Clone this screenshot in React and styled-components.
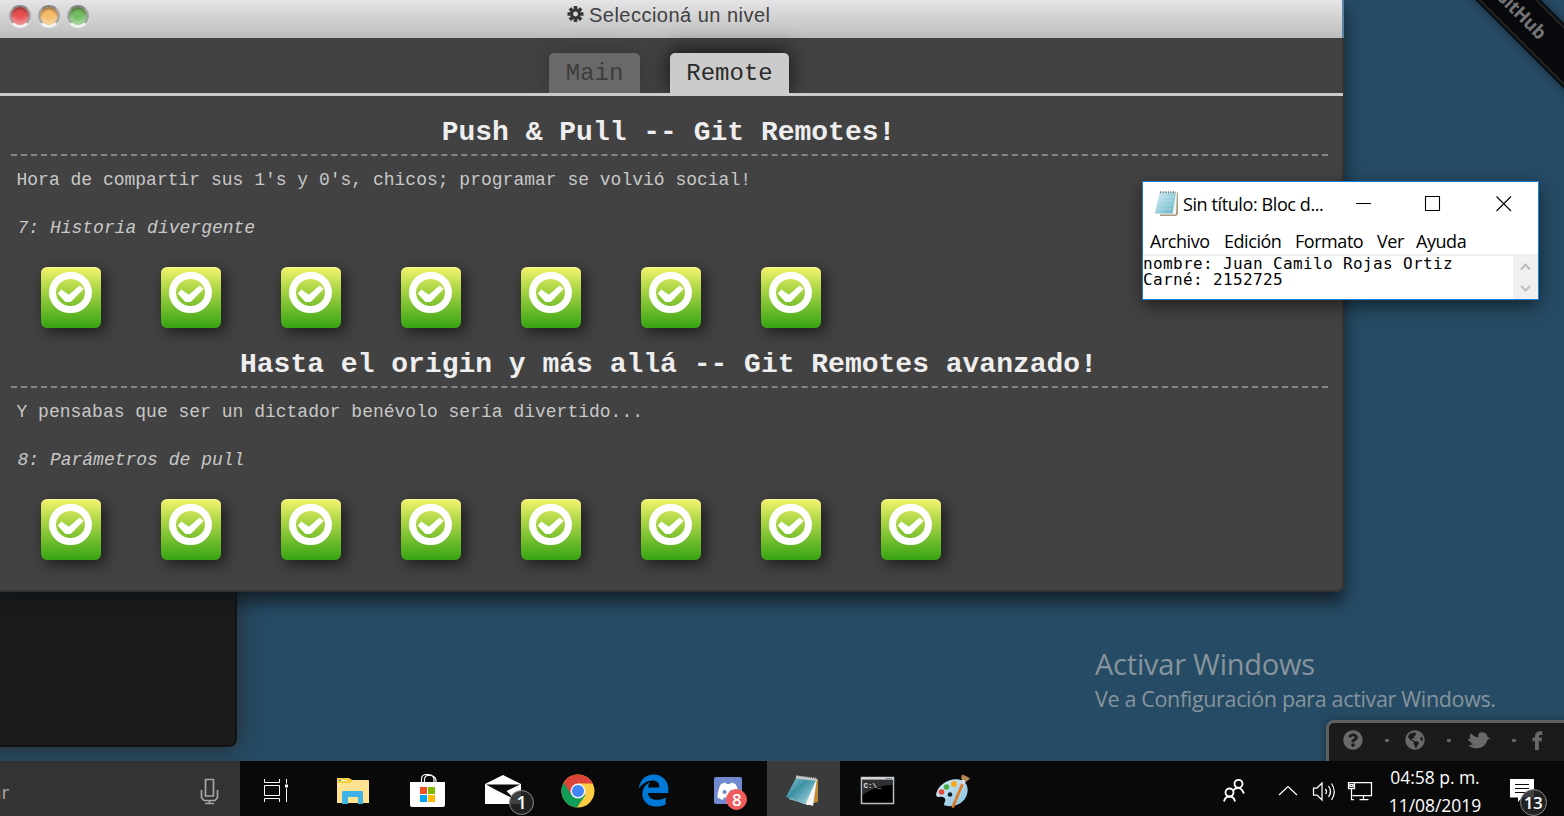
import React from 'react';
import styled, { createGlobalStyle, css } from 'styled-components';
import { FaQuestionCircle, FaGlobeAmericas, FaEdgeLegacy } from 'react-icons/fa';

const ui = '"Open Sans", "Noto Sans", sans-serif';
const mono = '"Liberation Mono", monospace';

const GlobalStyle = createGlobalStyle`
  * { box-sizing: border-box; }
  body { margin: 0; overflow: hidden; background: #264b64; }
  svg { display: block; }
`;

const Desktop = styled.div`
  position: relative;
  display: flex;
  flex-direction: column;
  width: 1564px;
  height: 816px;
  overflow: hidden;
  background: #264b64;
`;

const Workspace = styled.div`
  position: relative;
  flex: 1;
  overflow: hidden;
`;

const TerminalWindow = styled.div`
  position: absolute;
  left: -20px;
  top: 300px;
  width: 257px;
  height: 447px;
  background: #1b1b1b;
  border: 2px solid #131313;
  border-radius: 8px;
  box-shadow: 0 0 24px rgba(40, 40, 40, 0.9);
`;

/* Level selection window */
const LevelWindow = styled.section`
  position: absolute;
  left: 0;
  top: 0;
  width: 1344px;
  height: 592px;
  display: flex;
  flex-direction: column;
  border-bottom-right-radius: 6px;
  box-shadow: 0 10px 16px rgba(15, 20, 25, 0.75);
`;

const TitleBar = styled.header`
  display: flex;
  align-items: flex-start;
  height: 38px;
  padding: 3px 0 0 9px;
  background: linear-gradient(#e6e4e6, #bdbdbd);
  border-right: 2px solid #5c82a3;
`;

const Lights = styled.div`
  display: flex;
  gap: 7px;
  width: 84px;
  padding-top: 2px;
`;

const Light = styled.span`
  width: 22px;
  height: 22px;
  border-radius: 50%;
  border: 2px solid #858585;
  border-bottom-color: #f4f4f4;
  border-left-color: #a5a5a5;
  border-right-color: #a5a5a5;
  background: ${(p) => p.$fill};
  box-shadow: 0 1px 0 #eee, inset 0 2px 3px rgba(60, 30, 20, 0.5), inset 0 -4px 4px rgba(255, 255, 255, 0.4);
`;

const WindowTitle = styled.h1`
  display: flex;
  align-items: center;
  gap: 5px;
  margin: 0 0 0 474px;
  font: 400 20px/24px "Liberation Sans", sans-serif;
  letter-spacing: 0.48px;
  color: #404040;
`;

const WindowBody = styled.div`
  flex: 1;
  background: #424242;
  border-right: 2px solid #343434;
  border-bottom: 2px solid #343434;
  border-bottom-right-radius: 6px;
`;

const Tabs = styled.nav`
  display: flex;
  align-items: flex-end;
  gap: 30px;
  height: 58px;
  margin-right: -1px;
  padding-left: 549px;
  border-bottom: 3px solid #cbcbcb;
`;

const Tab = styled.div`
  width: ${(p) => p.$width}px;
  height: 40px;
  border-radius: 5px 5px 0 0;
  font: 400 24px/42px ${mono};
  text-align: center;
  background: #696969;
  color: #3d3d3d;
  box-shadow: 0 0 20px rgba(30, 30, 30, 0.35);
  clip-path: inset(-30px -30px 0 -30px);
  ${(p) => p.$active && css`
    background: #cbcbcb;
    color: #2a2a2a;
    box-shadow: 0 -2px 20px #111;
  `}
`;

const Sequence = styled.section`
  height: 232px;
  padding: 19px 14px 0 11px;
`;

const SequenceTitle = styled.h2`
  margin: 0;
  height: 41px;
  padding-right: 2px;
  border-bottom: 2px dashed #858585;
  font: 700 28px/36px ${mono};
  text-align: center;
  color: #eee;
`;

const About = styled.p`
  margin: 0;
  padding: 12px 0 0 5.5px;
  font: 400 18px/25px ${mono};
  color: #c8c8c8;
`;

const LevelGroup = styled.p`
  margin: 0;
  padding: 23px 0 0 6.5px;
  font: italic 400 18px/25px ${mono};
  color: #c8c8c8;
`;

const Levels = styled.div`
  display: flex;
  gap: 60px;
  padding: 26px 0 0 30px;
`;

const LevelButton = styled.div`
  width: 60px;
  height: 61px;
  border-radius: 6px;
  border-top: 1px solid #f6f79a;
  background: linear-gradient(#f1f36c, #a6d343 38%, #37a413);
  box-shadow: 4px 4px 14px rgba(15, 15, 15, 0.75);
`;

/* Notepad */
const Notepad = styled.section`
  position: absolute;
  left: 1142px;
  top: 181px;
  width: 397px;
  height: 119px;
  display: flex;
  flex-direction: column;
  background: #fff;
  border: 1px solid #1681d8;
  box-shadow: 0 6px 16px rgba(0, 0, 0, 0.5);
  color: #000;
`;

const NoteTitleBar = styled.div`
  display: flex;
  height: 46px;
  padding-left: 10px;
`;

const NoteTitle = styled.div`
  width: 164px;
  padding: 10px 0 0 3px;
  font: 400 18px/24px ${ui};
  letter-spacing: -0.4px;
  white-space: nowrap;
`;

const NoteMenu = styled.div`
  display: flex;
  gap: 14px;
  height: 28px;
  padding: 1px 0 0 7px;
  border-bottom: 2px solid #f0f0f0;
  font: 400 18px/25px ${ui};
`;

const MenuItem = styled.span`
  width: ${(p) => p.$width}px;
  letter-spacing: -0.45px;
  white-space: nowrap;
`;

const NoteBody = styled.div`
  flex: 1;
  display: flex;
  justify-content: space-between;
`;

const NoteText = styled.pre`
  margin: 0;
  font: 400 16px/16px "DejaVu Sans Mono", monospace;
  letter-spacing: 0.37px;
`;

const ScrollBar = styled.div`
  width: 25px;
  background: #f0f0f0;
`;

const Ribbon = styled.div`
  position: absolute;
  left: 1422px;
  top: -9px;
  width: 200px;
  height: 46px;
  transform: rotate(45deg);
  background: #08090d;
  box-shadow: 0 0 8px rgba(0, 0, 0, 0.5);
  padding: 2px 0;
`;

const RibbonStitch = styled.div`
  height: 42px;
  padding-right: 2px;
  border-top: 2px solid #242424;
  border-bottom: 2px solid #242424;
  font: 700 18.5px/38px ${ui};
  letter-spacing: -0.4px;
  text-align: center;
  color: #747474;
`;

const Watermark = styled.div`
  position: absolute;
  left: 1095px;
  top: 644px;
  color: #87949d;
  font-family: ${ui};
  white-space: nowrap;
`;

const WatermarkTitle = styled.div`
  font-size: 29px;
  line-height: 40px;
  letter-spacing: -0.22px;
`;

const WatermarkText = styled.div`
  font-size: 21.5px;
  line-height: 30px;
  letter-spacing: -0.34px;
`;

const SocialBar = styled.div`
  position: absolute;
  left: 1326px;
  top: 720px;
  width: 250px;
  height: 60px;
  display: flex;
  align-items: flex-start;
  padding: 7px 0 0 14px;
  background: #1b1b1b;
  border: 3px solid #5f5f5f;
  border-top-left-radius: 8px;
  box-shadow: 0 0 10px rgba(0, 0, 0, 0.3);
  color: #696969;
`;

const SocialItem = styled.span`
  display: flex;
  align-items: center;
  height: 20px;
  width: ${(p) => p.$width}px;
`;

const Dot = styled.span`
  width: 4px;
  height: 3px;
  margin: 9px ${(p) => p.$after}px 0 0;
  border-radius: 1px;
  background: #666;
`;

/* Taskbar */
const Taskbar = styled.footer`
  display: flex;
  height: 55px;
  background: #090909;
  color: #fff;
  font-family: ${ui};
`;

const SearchBox = styled.div`
  display: flex;
  justify-content: space-between;
  width: 240px;
  background: #333;
  color: #a8a8a8;
  font-size: 19px;
  line-height: 63px;
  overflow: hidden;
`;

const SearchText = styled.span`
  margin-left: -9px;
`;

const Tasks = styled.div`
  display: flex;
  gap: 2px;
  padding-left: 2px;
`;

const Task = styled.div`
  position: relative;
  width: 73px;
  height: 55px;
  background: ${(p) => (p.$active ? '#3b3b3b' : 'transparent')};
`;

const CountBadge = styled.span`
  position: absolute;
  left: ${(p) => p.$x}px;
  top: ${(p) => p.$y}px;
  width: ${(p) => p.$size}px;
  height: ${(p) => p.$size}px;
  border-radius: 50%;
  border: 1px solid ${(p) => (p.$red ? '#f15b5b' : '#8c8c8c')};
  background: ${(p) => (p.$red ? '#f15b5b' : 'rgba(38, 38, 38, 0.88)')};
  font: 600 ${(p) => p.$font}px/${(p) => p.$size - 2}px ${ui};
  text-align: center;
  letter-spacing: -0.5px;
`;

const EdgeMark = styled(FaEdgeLegacy)`
  width: 33px;
  height: 33px;
  margin: 13px 0 0 20px;
  color: #0078d7;
`;

const Tray = styled.div`
  display: flex;
  margin-left: auto;
  width: 350px;
`;

const Clock = styled.div`
  width: 110px;
  padding-top: 2px;
  font-size: 17.5px;
  line-height: 28px;
  letter-spacing: -0.05px;
  text-align: center;
  white-space: nowrap;
`;

const Notifications = styled.div`
  position: relative;
  width: 74px;
`;

const Icon = ({ w = 73, h = 55, children }) => (
  <svg width={w} height={h} viewBox={`0 0 ${w} ${h}`} fill="none">{children}</svg>
);

const Gear = () => (
  <svg width="17" height="18" viewBox="-9 -8 18 18">
    {[0, 45, 90, 135].map((a) => (
      <rect key={a} x="-1.9" y="-8.5" width="3.8" height="17" rx=".5" fill="#363636" transform={`rotate(${a})`} />
    ))}
    <circle r="5.6" fill="#363636" />
    <circle r="2.6" fill="#dcdbdc" />
  </svg>
);

const CheckMark = () => (
  <svg width="60" height="60" viewBox="0 0 60 60" fill="none">
    <ellipse cx="29.5" cy="24.5" rx="18" ry="17.1" stroke="#fff" strokeWidth="7" />
    <path d="M20.300 21.500 27.800 26.800 38.700 17.400 42.600 21 29.700 34H24.500L16.700 25.600Z" fill="#fff" />
  </svg>
);

const NotepadSmall = () => (
  <svg width="27" height="30" viewBox="0 0 27 30">
    <defs>
      <linearGradient id="pad" x1="0" y1="0" x2="1" y2="1">
        <stop offset="0" stopColor="#d9f1f5" /><stop offset=".6" stopColor="#8fcbd9" /><stop offset="1" stopColor="#63adc0" />
      </linearGradient>
    </defs>
    <path d="M7 3.500H25V25L23 27H7Z" fill="#a99a7e" />
    <path d="M6 3H24L23 25.500H6Z" fill="#f2f4f4" />
    <path d="M6.500 3.500H23L19.500 24.500H2Z" fill="url(#pad)" />
    <path d="M7 8H21M6 12H20M5.500 16H20M4.500 20H19" stroke="#b9dfe8" strokeWidth=".7" />
    <path d="M7 3.200H23" stroke="#6a7578" strokeWidth="2" strokeDasharray="1.2 1.4" />
  </svg>
);

const sequences = [
  {
    title: 'Push & Pull -- Git Remotes!',
    about: "Hora de compartir sus 1's y 0's, chicos; programar se volvió social!",
    group: '7: Historia divergente',
    levels: 7,
  },
  {
    title: 'Hasta el origin y más allá -- Git Remotes avanzado!',
    about: 'Y pensabas que ser un dictador benévolo sería divertido...',
    group: '8: Parámetros de pull',
    levels: 8,
  },
];

const menu = [['Archivo', 60], ['Edición', 57], ['Formato', 68], ['Ver', 25], ['Ayuda', 52]];

export default function App() {
  return (
    <Desktop>
      <GlobalStyle />
      <Workspace>
        <TerminalWindow />
        <Ribbon><RibbonStitch>GitHub</RibbonStitch></Ribbon>
        <LevelWindow>
          <TitleBar>
            <Lights>
              <Light $fill="#e84e50" />
              <Light $fill="#f5bb68" />
              <Light $fill="#70bd62" />
            </Lights>
            <WindowTitle><Gear />Seleccioná un nivel</WindowTitle>
          </TitleBar>
          <WindowBody>
            <Tabs>
              <Tab $width={91}>Main</Tab>
              <Tab $width={119} $active>Remote</Tab>
            </Tabs>
            {sequences.map((s) => (
              <Sequence key={s.title}>
                <SequenceTitle>{s.title}</SequenceTitle>
                <About>{s.about}</About>
                <LevelGroup>{s.group}</LevelGroup>
                <Levels>
                  {Array.from({ length: s.levels }, (_, i) => (
                    <LevelButton key={i}><CheckMark /></LevelButton>
                  ))}
                </Levels>
              </Sequence>
            ))}
          </WindowBody>
        </LevelWindow>

        <Notepad>
          <NoteTitleBar>
            <Icon w={27} h={40}><g transform="translate(0 7)"><NotepadSmall /></g></Icon>
            <NoteTitle>Sin título: Bloc d...</NoteTitle>
            <Icon w={185} h={46}>
              <path d="M12 21.500H27M81.500 14.500H95.500V28.500H81.500ZM152.500 14.500 167 29M167 14.500 152.500 29" stroke="#000" strokeWidth="1.1" />
            </Icon>
          </NoteTitleBar>
          <NoteMenu>
            {menu.map(([label, width]) => <MenuItem key={label} $width={width}>{label}</MenuItem>)}
          </NoteMenu>
          <NoteBody>
            <NoteText>{'nombre: Juan Camilo Rojas Ortiz\nCarné: 2152725'}</NoteText>
            <ScrollBar>
              <Icon w={25} h={43}>
                <path d="M8 13.500 12.500 8.500 17 13.500M8 30 12.500 34.500 17 30" stroke="#bdbdbd" strokeWidth="2" />
              </Icon>
            </ScrollBar>
          </NoteBody>
        </Notepad>

        <Watermark>
          <WatermarkTitle>Activar Windows</WatermarkTitle>
          <WatermarkText>Ve a Configuración para activar Windows.</WatermarkText>
        </Watermark>

        <SocialBar>
          <SocialItem $width={42}><FaQuestionCircle size={20} /></SocialItem>
          <Dot $after={16} />
          <SocialItem $width={42}><FaGlobeAmericas size={20} /></SocialItem>
          <Dot $after={16} />
          <SocialItem $width={45}>
            <svg width="24" height="20" viewBox="0 0 24 20" fill="#696969">
              <path d="M4 3C6 6.500 9.500 7 11.500 7.500 10.500 4 12.500 2 15 2.200 19 2.300 20.500 5 20.500 7L23.500 8.200 20.500 9.800C19.500 14.500 15.500 18.300 10 18.300 6 18.300 3.500 17.500 1 15 3 15.500 5 15 6 14 4 13.500 3.200 12.500 3.500 11.500 1.500 11 1 10 .8 8.500 1.800 9 2.700 9 3.500 8.800 2.500 7 2.800 5 4 3Z" />
            </svg>
          </SocialItem>
          <Dot $after={16} />
          <SocialItem $width={20}>
            <svg width="11" height="19" viewBox="0 0 11 19" fill="none" stroke="#696969" strokeWidth="3.8">
              <path d="M4.900 19V5.800Q4.900 2.200 8.200 2.200H10.300M0.500 8.300H9.800" />
            </svg>
          </SocialItem>
        </SocialBar>
      </Workspace>

      <Taskbar>
        <SearchBox>
          <SearchText>ar</SearchText>
          <Icon w={40} h={55}>
            <path d="M5.500 18.500H13.500V35H5.500ZM1.500 29V36.500L4 39.500H15L17.500 36.500V29M9.500 39.500V42.500M5 42.500H14" stroke="#a6a6a6" strokeWidth="1.7" strokeLinejoin="round" />
          </Icon>
        </SearchBox>
        <Tasks>
          <Task>
            <Icon>
              <path d="M22.500 18V21.500H37.500V18M22.500 24.500H37.500V34.500H22.500ZM22.500 41V37.500H37.500V41M44.500 18V41" stroke="#fff" />
              <rect x="42.500" y="23" width="4" height="4" fill="#fff" stroke="#090909" />
            </Icon>
          </Task>
          <Task>
            <Icon>
              <path d="M20 18Q20 17 21 17H31L34 19H51Q52 19 52 20V42H20Z" fill="#ffe391" />
              <path d="M20 17H32L35 19V20L33 22H20Z" fill="#f9cf3c" />
              <path d="M22 19.500H30" stroke="#fff" /><path d="M22 19.500H24" stroke="#2494d8" />
              <path d="M25 43V31Q25 30 26 30H45Q46 30 46 31V43H41V36H31V43Z" fill="#3fb3e8" />
            </Icon>
          </Task>
          <Task>
            <Icon>
              <path d="M29.500 22V17.500Q30 13.500 34 13.500H36Q41 13.500 42 18V22M32.500 22V18Q33 14.500 36 14.500H38Q43 14.500 44 19V22" stroke="#fff" strokeWidth="1.200" />
              <path d="M18 21H53V44Q53 46 51 46H20Q18 46 18 44Z" fill="#fff" />
              <path d="M28 26H35V33H28Z" fill="#f25022" /><path d="M36 26H43V33H36Z" fill="#7fba00" />
              <path d="M28 34H35V41H28Z" fill="#00a4ef" /><path d="M36 34H43V41H36Z" fill="#ffb900" />
            </Icon>
          </Task>
          <Task>
            <Icon>
              <path d="M18 23 36 14 54 23V43H18Z" fill="#fff" />
              <path d="M19 23.500H53L39.500 30 47 38 30 29.500Z" fill="#090909" />
            </Icon>
            <CountBadge $x={42} $y={29} $size={25} $font={18}>1</CountBadge>
          </Task>
          <Task>
            <Icon>
              <circle cx="36" cy="30" r="16.500" fill="#ffcd42" />
              <path d="M36 30 21.700 21.700A16.500 16.500 0 0 0 35 46.500L43.500 34Z" fill="#0f9d58" />
              <path d="M36 22.500H50.700A16.500 16.500 0 0 0 21.700 21.700L29.500 34Z" fill="#db4437" />
              <circle cx="36" cy="30" r="7.500" fill="#f1f1f1" /><circle cx="36" cy="30" r="6" fill="#4285f4" />
            </Icon>
          </Task>
          <Task><EdgeMark /></Task>
          <Task>
            <Icon>
              <rect x="22" y="16" width="28" height="27" rx="2" fill="#7289cf" />
              <path d="M29 23 33.500 21.500 34.500 23H38L39 21.500 43.500 23Q47 29 47 36.500L42 39 40.500 36.500H32L30.500 39 25.500 36.500Q25.500 29 29 23Z" fill="#fff" />
              <circle cx="32.500" cy="31" r="2.100" fill="#7289cf" /><circle cx="39.500" cy="31" r="2.100" fill="#7289cf" />
            </Icon>
            <CountBadge $red $x={34} $y={28} $size={21} $font={17}>8</CountBadge>
          </Task>
          <Task $active>
            <Icon>
              <defs>
                <linearGradient id="page" x1="0" y1="0" x2="1" y2="1">
                  <stop offset="0" stopColor="#8ecbd5" /><stop offset=".4" stopColor="#3e91a5" /><stop offset="1" stopColor="#b9e4eb" />
                </linearGradient>
              </defs>
              <path d="M47 19 51 18V41L46 42Z" fill="#c08a35" />
              <path d="M30 15 50 18 46 45 22 38Z" fill="#dfe6e7" />
              <path d="M29 17 49 19.500 38 43.500 19 36Z" fill="url(#page)" />
              <path d="M49 19 39 44H46Z" fill="#f4f5f2" />
              <path d="M29 16 49 18.500" stroke="#b9bcbc" strokeWidth="3.500" strokeDasharray="1.300 .8" />
            </Icon>
          </Task>
          <Task>
            <Icon>
              <path d="M19.500 16.500H51.500V42.500H19.500Z" fill="#000" stroke="#b8bdc1" strokeWidth="1.500" />
              <path d="M19 17.500H52" stroke="#d5d9dc" strokeWidth="2.500" />
              <path d="M20 18.700H51V24Q37 23 20 34Z" fill="#4b4b4b" opacity=".65" />
              <path d="M44 17.500H50" stroke="#4f6584" strokeDasharray="1.500 1" />
              <text x="21.500" y="26.500" fill="#e5e5e5" fontFamily="Liberation Mono" fontSize="7.500" fontWeight="700">C:\_</text>
            </Icon>
          </Task>
          <Task>
            <Icon>
              <defs>
                <linearGradient id="palette" x1="0" y1="0" x2="1" y2="1">
                  <stop offset="0" stopColor="#d6eff9" /><stop offset="1" stopColor="#86bfdf" />
                </linearGradient>
              </defs>
              <g transform="translate(-1 0)">
                <path d="M20 34C21 25 32 17 43 18.500 53 20 54 32 48 39 42 46 31 46 28 44 28 41 31 39 28 36.500 25 34.500 22 38 20 34Z" fill="url(#palette)" />
                <circle cx="25.500" cy="31" r="2.800" fill="#e54b3d" /><circle cx="30.500" cy="26" r="2.800" fill="#4bae45" /><circle cx="38" cy="23" r="3" fill="#f4a91f" />
                <circle cx="34" cy="33.500" r="2.300" fill="#132027" />
                <path d="M46.500 23 37 45.500" stroke="#df7920" strokeWidth="2.800" strokeLinecap="round" />
                <path d="M46 23 49 18" stroke="#d9dbdc" strokeWidth="4" />
                <path d="M45 17.500 46 13.500 50 15 54 17.500 50.500 20.500Z" fill="#b88757" />
              </g>
            </Icon>
          </Task>
        </Tasks>

        <Tray>
          <Icon w={166} h={55}>
            <g stroke="#fff" strokeWidth="1.800">
              <circle cx="24.500" cy="22.800" r="4" /><path d="M19.500 29Q24.500 24.500 28 29L30 32.500" />
              <circle cx="15.500" cy="31.500" r="4" /><path d="M10 40.500Q11 35.500 15.500 35.500 20 35.500 21 40.500" />
            </g>
            <g stroke="#fff" strokeWidth="1.250">
              <path d="M65 34 74 25.500 83 34" />
              <path d="M99.500 27H103L108 22V39L103 34H99.500ZM111.500 28Q113.500 30.500 111.500 33M114.500 25Q118.500 30.500 114.500 36M117.500 22.500Q123 30.500 117.500 39" />
              <path d="M141 21.500H157.500V34.500H138.500M145.500 38.500H154.500M149.500 35V38.500M134.500 21.500H140.500V27.500H134.500ZM137.500 28V38.500H140M136 23.500H139V25.500H136Z" />
            </g>
          </Icon>
          <Clock>04:58 p. m.<br />11/08/2019</Clock>
          <Notifications>
            <Icon w={74} h={55}>
              <path d="M20 18H44V36.500H32L28 41V36.500H20Z" fill="#fff" />
              <path d="M25 23.500H39M25 27.500H39M25 31.500H36" stroke="#090909" />
            </Icon>
            <CountBadge $x={29.5} $y={28} $size={27} $font={17}>13</CountBadge>
          </Notifications>
        </Tray>
      </Taskbar>
    </Desktop>
  );
}
